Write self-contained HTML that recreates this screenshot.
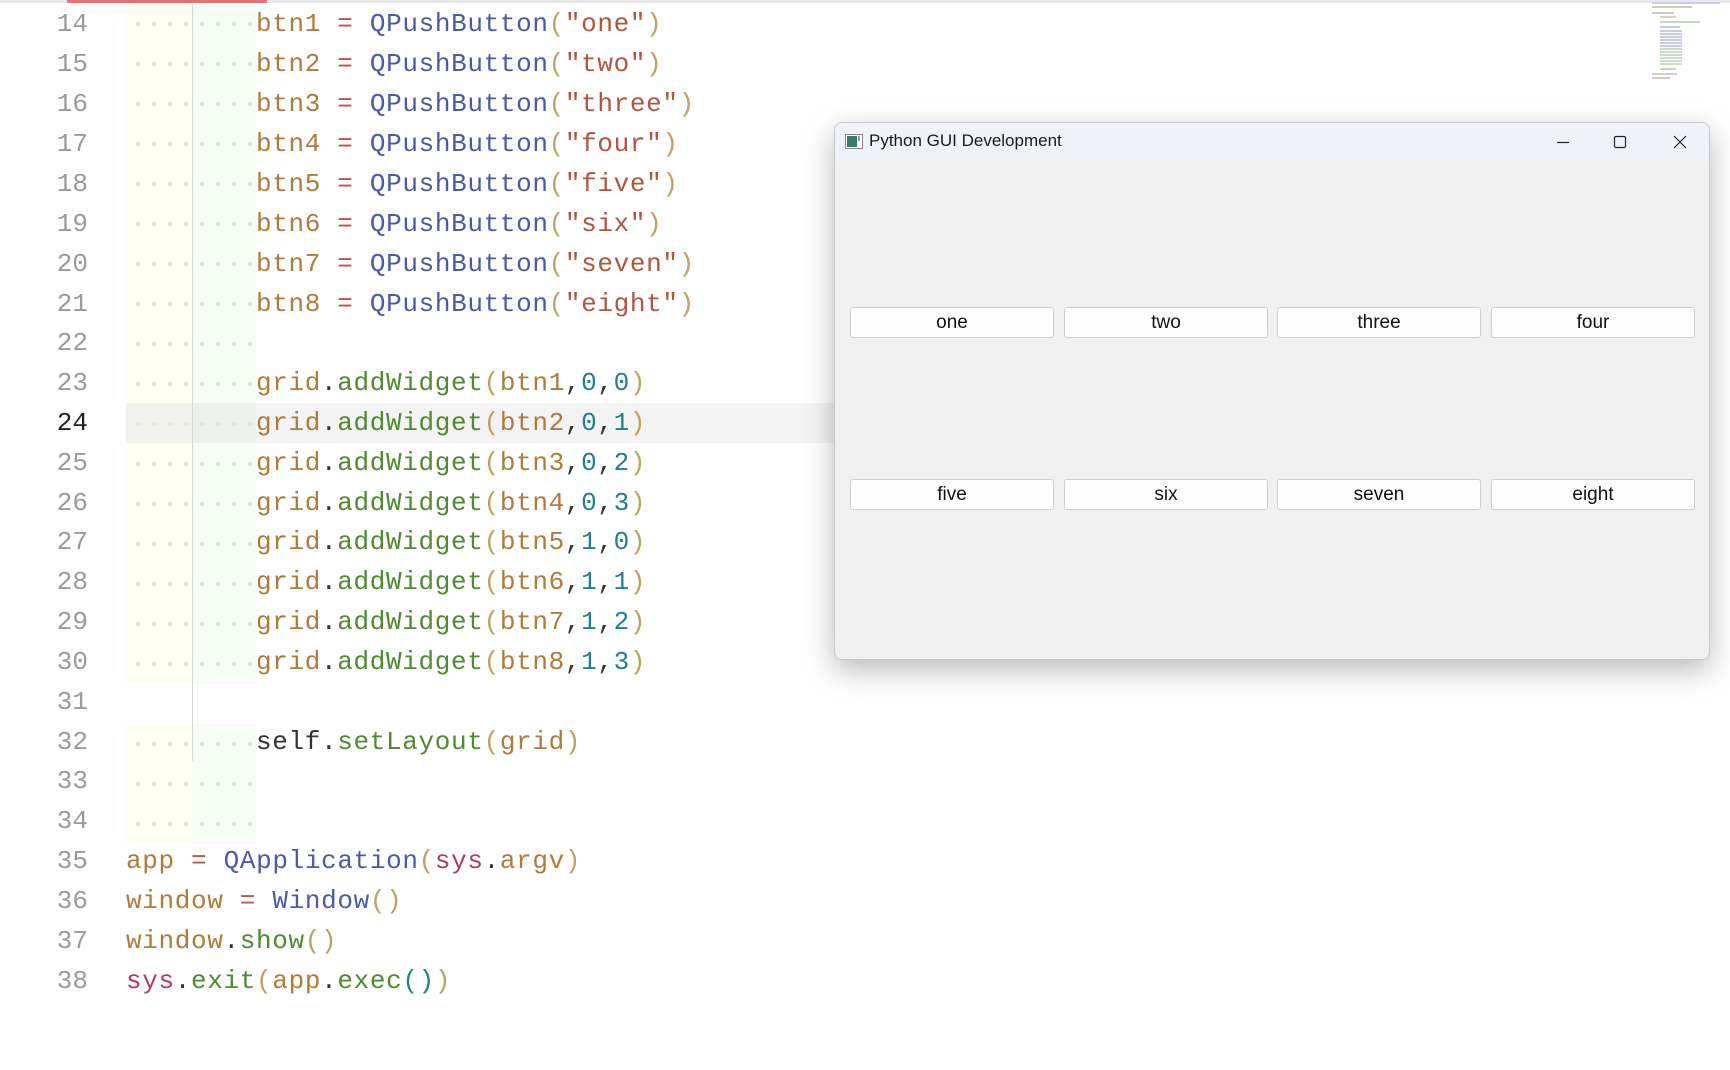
<!DOCTYPE html>
<html><head><meta charset="utf-8"><style>
*{margin:0;padding:0;box-sizing:border-box}
body{width:1730px;height:1070px;background:#fff;position:relative;overflow:hidden;font-family:"Liberation Sans",sans-serif}
.topbar{position:absolute;left:0;top:0;width:1730px;height:3px;background:#e8e8e8}
.red{position:absolute;left:67px;top:0;width:200px;height:3px;background:#e57373}
.ln{position:absolute;left:0;width:88px;text-align:right;font-family:"Liberation Mono",monospace;font-size:26px;color:#9a9a9a;height:40px;line-height:40px}
.ln.cur{color:#222}
.code{position:absolute;left:126px;font-family:"Liberation Mono",monospace;font-size:26px;height:40px;line-height:40px;white-space:pre;letter-spacing:0.65px}
.ind{position:absolute;height:40px}
.y{left:126px;width:66px;background:#fefef2}
.g{left:192px;width:64px;background:#f5fdf5}
.dots{position:absolute;left:126px;width:130px;height:40px;background-image:radial-gradient(circle,#e2e2e2 2px,transparent 2.5px);background-size:16px 40px;background-position:4px 0}
.guide{position:absolute;left:192px;width:1px;background:#d8d8d8}
.v{color:#b07a3a}.o{color:#c0504d}.c{color:#4a5aa8}.s{color:#b0553f}.p{color:#c0a060}.m{color:#4e8a2e}.n{color:#1f7f8f}.k{color:#333}.sy{color:#b03a6a}
.win{position:absolute;left:834px;top:122px;width:876px;height:538px;background:#f0f0f0;border:1px solid #c8c8c8;border-radius:8px;box-shadow:0 10px 30px rgba(0,0,0,0.28);overflow:hidden}
.title{height:37px;background:#eff2f8;position:relative}
.title span{position:absolute;left:34px;top:8px;font-size:17px;color:#1a1a1a}
.btn{position:absolute;width:204px;height:31px;background:#fdfdfd;border:1px solid #cfcfcf;border-radius:3px;text-align:center;line-height:29px;font-size:19px;color:#111}
</style></head><body>
<div class="topbar"></div><div class="red"></div>

<div style="position:absolute;left:126px;top:403px;width:710px;height:40px;background:#f3f3f3"></div>

<div class="ind y" style="top:4px;height:680px"></div>
<div class="ind g" style="top:4px;height:680px"></div>
<div class="ind y" style="top:724px;height:120px"></div>
<div class="ind g" style="top:724px;height:120px"></div>
<div class="ind" style="left:126px;width:130px;top:403px;height:40px;background:rgba(230,230,230,0.5)"></div>
<div class="dots" style="top:4px;height:680px"></div>
<div class="dots" style="top:724px;height:120px"></div>
<div class="guide" style="top:4px;height:757px"></div>

<div class="ln" style="top:4px">14</div>
<div class="ln" style="top:44px">15</div>
<div class="ln" style="top:84px">16</div>
<div class="ln" style="top:124px">17</div>
<div class="ln" style="top:164px">18</div>
<div class="ln" style="top:204px">19</div>
<div class="ln" style="top:244px">20</div>
<div class="ln" style="top:284px">21</div>
<div class="ln" style="top:323px">22</div>
<div class="ln" style="top:363px">23</div>
<div class="ln cur" style="top:403px">24</div>
<div class="ln" style="top:443px">25</div>
<div class="ln" style="top:483px">26</div>
<div class="ln" style="top:522px">27</div>
<div class="ln" style="top:562px">28</div>
<div class="ln" style="top:602px">29</div>
<div class="ln" style="top:642px">30</div>
<div class="ln" style="top:682px">31</div>
<div class="ln" style="top:722px">32</div>
<div class="ln" style="top:761px">33</div>
<div class="ln" style="top:801px">34</div>
<div class="ln" style="top:841px">35</div>
<div class="ln" style="top:881px">36</div>
<div class="ln" style="top:921px">37</div>
<div class="ln" style="top:961px">38</div>

<div class="code" style="top:4px;left:256px"><span class="v">btn1</span> <span class="o">=</span> <span class="c">QPushButton</span><span class="p">(</span><span class="s">"one"</span><span class="p">)</span></div>
<div class="code" style="top:44px;left:256px"><span class="v">btn2</span> <span class="o">=</span> <span class="c">QPushButton</span><span class="p">(</span><span class="s">"two"</span><span class="p">)</span></div>
<div class="code" style="top:84px;left:256px"><span class="v">btn3</span> <span class="o">=</span> <span class="c">QPushButton</span><span class="p">(</span><span class="s">"three"</span><span class="p">)</span></div>
<div class="code" style="top:124px;left:256px"><span class="v">btn4</span> <span class="o">=</span> <span class="c">QPushButton</span><span class="p">(</span><span class="s">"four"</span><span class="p">)</span></div>
<div class="code" style="top:164px;left:256px"><span class="v">btn5</span> <span class="o">=</span> <span class="c">QPushButton</span><span class="p">(</span><span class="s">"five"</span><span class="p">)</span></div>
<div class="code" style="top:204px;left:256px"><span class="v">btn6</span> <span class="o">=</span> <span class="c">QPushButton</span><span class="p">(</span><span class="s">"six"</span><span class="p">)</span></div>
<div class="code" style="top:244px;left:256px"><span class="v">btn7</span> <span class="o">=</span> <span class="c">QPushButton</span><span class="p">(</span><span class="s">"seven"</span><span class="p">)</span></div>
<div class="code" style="top:284px;left:256px"><span class="v">btn8</span> <span class="o">=</span> <span class="c">QPushButton</span><span class="p">(</span><span class="s">"eight"</span><span class="p">)</span></div>
<div class="code" style="top:363px;left:256px"><span class="v">grid</span><span class="k">.</span><span class="m">addWidget</span><span class="p">(</span><span class="v">btn1</span><span class="k">,</span><span class="n">0</span><span class="k">,</span><span class="n">0</span><span class="p">)</span></div>
<div class="code" style="top:403px;left:256px"><span class="v">grid</span><span class="k">.</span><span class="m">addWidget</span><span class="p">(</span><span class="v">btn2</span><span class="k">,</span><span class="n">0</span><span class="k">,</span><span class="n">1</span><span class="p">)</span></div>
<div class="code" style="top:443px;left:256px"><span class="v">grid</span><span class="k">.</span><span class="m">addWidget</span><span class="p">(</span><span class="v">btn3</span><span class="k">,</span><span class="n">0</span><span class="k">,</span><span class="n">2</span><span class="p">)</span></div>
<div class="code" style="top:483px;left:256px"><span class="v">grid</span><span class="k">.</span><span class="m">addWidget</span><span class="p">(</span><span class="v">btn4</span><span class="k">,</span><span class="n">0</span><span class="k">,</span><span class="n">3</span><span class="p">)</span></div>
<div class="code" style="top:522px;left:256px"><span class="v">grid</span><span class="k">.</span><span class="m">addWidget</span><span class="p">(</span><span class="v">btn5</span><span class="k">,</span><span class="n">1</span><span class="k">,</span><span class="n">0</span><span class="p">)</span></div>
<div class="code" style="top:562px;left:256px"><span class="v">grid</span><span class="k">.</span><span class="m">addWidget</span><span class="p">(</span><span class="v">btn6</span><span class="k">,</span><span class="n">1</span><span class="k">,</span><span class="n">1</span><span class="p">)</span></div>
<div class="code" style="top:602px;left:256px"><span class="v">grid</span><span class="k">.</span><span class="m">addWidget</span><span class="p">(</span><span class="v">btn7</span><span class="k">,</span><span class="n">1</span><span class="k">,</span><span class="n">2</span><span class="p">)</span></div>
<div class="code" style="top:642px;left:256px"><span class="v">grid</span><span class="k">.</span><span class="m">addWidget</span><span class="p">(</span><span class="v">btn8</span><span class="k">,</span><span class="n">1</span><span class="k">,</span><span class="n">3</span><span class="p">)</span></div>
<div class="code" style="top:722px;left:256px"><span class="k">self</span><span class="k">.</span><span class="m">setLayout</span><span class="p">(</span><span class="v">grid</span><span class="p">)</span></div>
<div class="code" style="top:841px"><span class="v">app</span> <span class="o">=</span> <span class="c">QApplication</span><span class="p">(</span><span class="sy">sys</span><span class="k">.</span><span class="v">argv</span><span class="p">)</span></div>
<div class="code" style="top:881px"><span class="v">window</span> <span class="o">=</span> <span class="c">Window</span><span class="p">()</span></div>
<div class="code" style="top:921px"><span class="v">window</span><span class="k">.</span><span class="m">show</span><span class="p">()</span></div>
<div class="code" style="top:961px"><span class="sy">sys</span><span class="k">.</span><span class="m">exit</span><span class="p">(</span><span class="v">app</span><span class="k">.</span><span class="m">exec</span><span class="n">()</span><span class="p">)</span></div>

<div style="position:absolute;left:1652px;top:2px;width:70px;height:76px">
<div style="position:absolute;left:0;top:0;width:68px;height:2px;background:#c8cce8"></div>
<div style="position:absolute;left:0;top:4px;width:40px;height:2px;background:#d8c8b8"></div>
<div style="position:absolute;left:0;top:10px;width:22px;height:2px;background:#e0c0c0"></div>
<div style="position:absolute;left:8px;top:14px;width:16px;height:2px;background:#d8d0b8"></div>
<div style="position:absolute;left:8px;top:19px;width:40px;height:2px;background:#c8d8c0"></div>
<div style="position:absolute;left:8px;top:24px;width:20px;height:2px;background:#c8cce8"></div>
<div style="position:absolute;left:8px;top:28px;width:22px;height:17px;background:repeating-linear-gradient(#c8cce8 0 2px,transparent 2px 3px)"></div>
<div style="position:absolute;left:8px;top:46px;width:22px;height:17px;background:repeating-linear-gradient(#c8dcc8 0 2px,transparent 2px 3px)"></div>
<div style="position:absolute;left:8px;top:66px;width:16px;height:2px;background:#c8d8c0"></div>
<div style="position:absolute;left:0;top:71px;width:25px;height:2px;background:#d8c8d8"></div>
<div style="position:absolute;left:0;top:75px;width:18px;height:2px;background:#d8c8b8"></div>
</div>

<div class="win">
 <div class="title">
  <svg style="position:absolute;left:10px;top:11px" width="18" height="15" viewBox="0 0 18 15"><rect x="0.5" y="0.5" width="17" height="14" fill="#fff" stroke="#888"/><rect x="2" y="2" width="10" height="11" fill="#3a7a6a"/><rect x="13" y="2" width="2" height="5" fill="#999"/></svg>
  <span>Python GUI Development</span>
  <svg style="position:absolute;left:720px;top:11px" width="16" height="16"><line x1="2" y1="8.5" x2="14" y2="8.5" stroke="#222" stroke-width="1.2"/></svg>
  <svg style="position:absolute;left:777px;top:11px" width="16" height="16"><rect x="2.5" y="2.5" width="11" height="11" rx="1.5" fill="none" stroke="#222" stroke-width="1.2"/></svg>
  <svg style="position:absolute;left:837px;top:11px" width="16" height="16"><path d="M2 2L14 14M14 2L2 14" stroke="#222" stroke-width="1.2"/></svg>
 </div>
 <div class="btn" style="left:15px;top:184px">one</div>
 <div class="btn" style="left:229px;top:184px">two</div>
 <div class="btn" style="left:442px;top:184px">three</div>
 <div class="btn" style="left:656px;top:184px">four</div>
 <div class="btn" style="left:15px;top:356px">five</div>
 <div class="btn" style="left:229px;top:356px">six</div>
 <div class="btn" style="left:442px;top:356px">seven</div>
 <div class="btn" style="left:656px;top:356px">eight</div>
</div>
</body></html>
